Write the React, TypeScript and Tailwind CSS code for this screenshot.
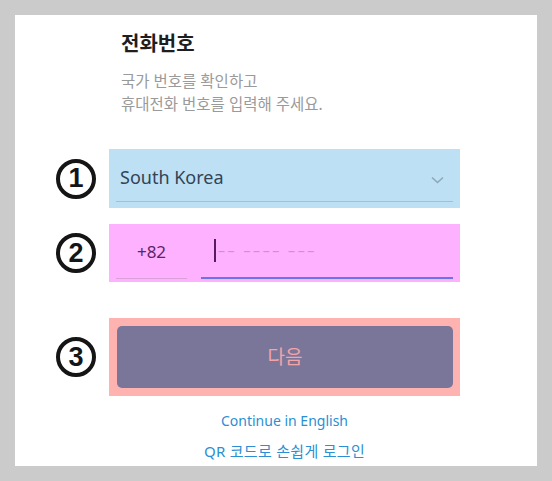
import React from "react";

const font = { fontFamily: '"Noto Sans", "Noto Sans CJK KR", sans-serif' };

function Circle({ n }: { n: string }) {
  return (
    <div className="w-[40px] h-[40px] shrink-0 rounded-full border-[4px] border-[#151515] flex items-center justify-center">
      <span
        className="text-[27px] leading-none font-black text-[#151515]"
        style={{ fontFamily: '"Liberation Sans", Arial, sans-serif' }}
      >
        {n}
      </span>
    </div>
  );
}

export default function App() {
  return (
    <div className="w-[552px] h-[481px] bg-[#cbcbcb] pt-[15px] pl-[15px]" style={font}>
      <div className="w-[522px] h-[451px] bg-white flex flex-col">
        <div className="pl-[106px] pt-[16px]">
          <div className="text-[20px] leading-[26px] font-bold text-[#1e1e1e]">전화번호</div>
          <div className="mt-[13px] text-[15.5px] leading-[23px] text-[#9a9a9a]">
            <div>국가 번호를 확인하고</div>
            <div>휴대전화 번호를 입력해 주세요.</div>
          </div>
        </div>

        <div className="mt-[33px] flex items-center pl-[41px] gap-[13px]">
          <Circle n="1" />
          <div className="w-[351px] h-[59px] bg-[#bde0f5] px-[7px] pb-[6px] flex">
            <div className="flex-1 border-b border-[#9fc0d6] flex items-center justify-between pl-[4px] pr-[9px] pt-[4px]">
              <span className="text-[18px] text-[#334455]">South Korea</span>
              <svg width="13" height="8" viewBox="0 0 13 8" className="mt-[6px]">
                <path d="M1 1.5 L6.5 6.5 L12 1.5" fill="none" stroke="#8fa6b8" strokeWidth="1.6" />
              </svg>
            </div>
          </div>
        </div>

        <div className="mt-[16px] flex items-center pl-[41px] gap-[13px]">
          <Circle n="2" />
          <div className="w-[351px] h-[58px] bg-[#feb1fe] px-[7px] pb-[3px] flex gap-[14px]">
            <div className="w-[71px] border-b border-[#d9a0d9] flex items-center justify-center pt-[1px]">
              <span className="text-[17px] text-[#5b2466]">+82</span>
            </div>
            <div className="flex-1 border-b-2 border-[#6c72e8] flex items-center pl-[13px]">
              <div className="w-[2px] h-[23px] bg-[#5a1860]" />
              <span className="text-[14px] text-[#cf8fd2] tracking-[2.6px] pl-[2px]">–– –––– –––</span>
            </div>
          </div>
        </div>

        <div className="mt-[36px] flex items-center pl-[41px] gap-[13px]">
          <Circle n="3" />
          <div className="w-[351px] h-[78px] bg-[#ffb3b1] pl-[8px] pr-[7px] py-[8px] flex">
            <div className="flex-1 rounded-[5px] bg-[#7a7699] flex items-center justify-center">
              <span className="text-[19px] text-[#f3a4a8]">다음</span>
            </div>
          </div>
        </div>

        <div className="pl-[94px] w-[445px] flex flex-col items-center mt-[10px]">
          <div className="text-[14px] leading-[30px] text-[#2a8fd3]">Continue in English</div>
          <div className="text-[15px] leading-[30px] tracking-[0.3px] text-[#2a8fd3]">QR 코드로 손쉽게 로그인</div>
        </div>
      </div>
    </div>
  );
}
